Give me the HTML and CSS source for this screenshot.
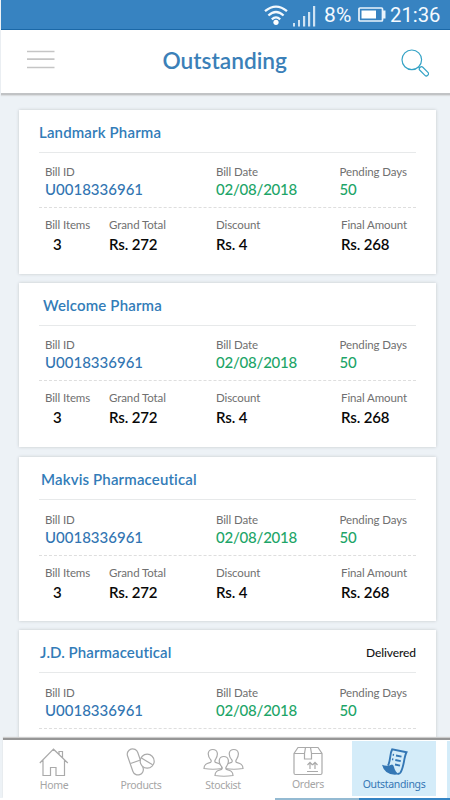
FILE: index.html
```html
<!DOCTYPE html>
<html lang="en">
<head>
<meta charset="utf-8">
<title>Outstanding</title>
<link rel="stylesheet" href="styles.css">
</head>
<body>
<div class="app">
  <div class="status">
    <svg class="wifi" width="24" height="22" viewBox="0 0 24 22" fill="none" stroke="#f2f8fd" stroke-width="2.3"><path d="M1 6.200Q12-3 23 6.200M4.400 10.500Q12 3.600 19.600 10.500M7.800 14.300Q12 10.500 16.200 14.300"/><circle cx="12" cy="17.300" r="2.600" fill="#fff" stroke="none"/></svg>
    <svg class="signal" width="23" height="21" viewBox="0 0 23 21" fill="#cfe3f3"><path d="M0 17h2v3.500H0zM5 14h2v6.500H5zM10 10h2.200v10.500H10zM15 6h2.200v14.500H15zM20 0h2.200v20.500H20z"/></svg>
    <span class="percent">8%</span>
    <svg class="battery" width="28" height="16" viewBox="0 0 28 16"><rect x="1" y="1" width="23.500" height="13" rx="1" fill="none" stroke="#e9f3fb" stroke-width="1.700"/><path d="M3.500 3.500h14.500v8H3.500z" fill="#fff"/><path d="M25 3.500h2.500v8H25z" fill="#e9f3fb"/></svg>
    <span class="clock">21:36</span>
  </div>
  <header class="header">
    <svg class="menu" width="28" height="20" viewBox="0 0 28 20" stroke="#c5c5c5" stroke-width="1.700"><path d="M0 1.500h27.500M0 9.200h27.500M0 17.500h27.500"/></svg>
    <h1 class="title">Outstanding</h1>
    <svg class="search" width="28" height="28" viewBox="0 0 28 28" fill="none" stroke="#35a3c6" stroke-width="1.200"><circle cx="10.800" cy="10.800" r="9.800"/><path d="M17.300 17.600l1.600 1.700"/><rect x="17.400" y="20.200" width="11" height="4.200" rx="1.900" transform="rotate(45 22.900 22.300)"/></svg>
  </header>
  <main class="list">
    <article class="card">
      <div class="card-head"><h2 class="name">Landmark Pharma</h2></div>
      <div class="row bill"><div><p>Bill ID</p><b class="id">U0018336961</b></div><div><p>Bill Date</p><b>02/08/2018</b></div><div><p>Pending Days</p><b>50</b></div></div>
      <div class="row amounts"><div><p>Bill Items</p><b class="count">3</b></div><div><p>Grand Total</p><b>Rs. 272</b></div><div><p>Discount</p><b>Rs. 4</b></div><div><p>Final Amount</p><b>Rs. 268</b></div></div>
    </article>
    <article class="card">
      <div class="card-head"><h2 class="name welcome">Welcome Pharma</h2></div>
      <div class="row bill"><div><p>Bill ID</p><b class="id">U0018336961</b></div><div><p>Bill Date</p><b>02/08/2018</b></div><div><p>Pending Days</p><b>50</b></div></div>
      <div class="row amounts"><div><p>Bill Items</p><b class="count">3</b></div><div><p>Grand Total</p><b>Rs. 272</b></div><div><p>Discount</p><b>Rs. 4</b></div><div><p>Final Amount</p><b>Rs. 268</b></div></div>
    </article>
    <article class="card late">
      <div class="card-head"><h2 class="name makvis">Makvis Pharmaceutical</h2></div>
      <div class="row bill"><div><p>Bill ID</p><b class="id">U0018336961</b></div><div><p>Bill Date</p><b>02/08/2018</b></div><div><p>Pending Days</p><b>50</b></div></div>
      <div class="row amounts"><div><p>Bill Items</p><b class="count">3</b></div><div><p>Grand Total</p><b>Rs. 272</b></div><div><p>Discount</p><b>Rs. 4</b></div><div><p>Final Amount</p><b>Rs. 268</b></div></div>
    </article>
    <article class="card late">
      <div class="card-head"><h2 class="name jd">J.D. Pharmaceutical</h2><span class="state">Delivered</span></div>
      <div class="row bill"><div><p>Bill ID</p><b class="id">U0018336961</b></div><div><p>Bill Date</p><b>02/08/2018</b></div><div><p>Pending Days</p><b>50</b></div></div>
    </article>
  </main>
  <nav class="nav">
    <a class="tab"><svg width="30" height="29" viewBox="0 0 30 29"><path d="M.8 15L14.500 1.200 28.800 15M4 12v15.500h7.500v-8h5.500v8h8.500V12M20 6V3.500h3.500V9.500"/></svg><span>Home</span></a>
    <a class="tab products"><svg width="30" height="29" viewBox="0 0 30 29" stroke-width="1.500"><rect x="3.900" y=".4" width="10.800" height="27" rx="5.400" transform="rotate(-19 9.300 13.900)"/><path d="M4.500 15.500l10-3.500"/><circle cx="21.200" cy="13.200" r="7" fill="#fff"/><path d="M15.400 10l11.200 6.800"/></svg><span>Products</span></a>
    <a class="tab stockist"><svg width="41" height="29" viewBox="0 0 41 29" stroke-width="1"><path id="person" d="M1 20.500c0-4.500 3-5 6.500-6 1-.7 1-2 0-3C4 7 4.500 1.500 9.800 1.500S15.500 7 12.500 11.500c-1 1-.8 2.300 0 3 3.500 1 6.500 1.500 6.500 6Q10 22 1 20.500z"/><use href="#person" x="21"/><use href="#person" x="11" y="7" fill="#fff"/></svg><span>Stockist</span></a>
    <a class="tab orders"><svg width="30" height="30" viewBox="0 0 30 30" stroke-width="1.400"><path d="M1 7.500L5 1.500h20l4 6V27q0 1.500-1.500 1.500h-25Q1 28.500 1 27zM1 7.500h10.500M18.500 7.500H29M12.500 1.500l-1 6V13h7V7.500l-1-6M14 25.500h11M17 23v-6M14.500 19l2.500-2.700 2.500 2.700M22 23v-6M19.500 19l2.500-2.700 2.500 2.700"/></svg><span>Orders</span></a>
    <a class="tab active"><svg width="28" height="30" viewBox="0 0 28 30"><path d="M8 19.500C11 14 9.500 8 12.200 3.200L26.500 6.200C23.500 12 24.500 20 20.500 26.500q-1.500 1.800-3 1" stroke-width="1.900"/><path d="M2 18.800q5 2 10-.3 1.500 0 2 2.500 1 5 5 7.300Q5 30.500 2 18.800z" fill="#3477b5" stroke="none"/><path d="M16 9.500l5.500 1.200M15.300 14l5.500 1.200M15 18.500l5 1.200M12.700 8.700l1.300.3M12 13.200l1.300.3" stroke-width="1.800"/></svg><span>Outstandings</span></a>
    <i class="edge"></i>
  </nav>
  <div class="bottom-line"><i></i><b></b></div>
</div>
</body>
</html>
```

FILE: styles.css
```css
* { box-sizing: border-box; margin: 0; padding: 0; }
body { font-family: Lato, sans-serif; background: #edf2f6; font-variant-ligatures: none; }
.app { width: 450px; height: 800px; overflow: hidden; display: flex; flex-direction: column; }
.status { height: 30px; flex: none; display: flex; align-items: flex-start; margin-left: 1px; padding-left: 263px; background: #3783c1; border-bottom: 1px solid #1b68a7; font: 20.3px/30px Roboto, sans-serif; color: #f4faff; }
.wifi { margin-top: 5px; }
.signal { margin: 6px 0 0 5px; }
.percent { width: 34px; margin-left: 8px; font-size: 21px; letter-spacing: .3px; }
.battery { margin-top: 7px; }
.clock { margin-left: 4px; }
.header { height: 65px; flex: none; display: flex; margin-left: 1px; background: #fff; border-bottom: 2px solid #c1c3c5; box-shadow: 0 1px 1px #dadddf; position: relative; }
.menu { margin: 20px 0 0 26px; }
.title { width: 126px; margin: 16px 0 0 107.500px; font-size: 22.7px; line-height: 30px; font-weight: 600; color: #3b80b8; white-space: nowrap; }
.search { margin: 19px 0 0 112.500px; }
.list { flex: none; height: 643px; padding: 15px 14px 0 19px; overflow: hidden; display: flex; flex-direction: column; gap: 9.300px; }
.card { height: 164px; flex: none; padding: 0 20px; background: #fff; box-shadow: 0 0 3px #c3c7ca; }
.card-head { height: 43px; display: flex; justify-content: space-between; border-bottom: 1px solid #e7e9ea; padding-top: 12px; }
.name { font-size: 15px; line-height: 20px; letter-spacing: .15px; font-weight: 600; color: #327cb8; white-space: nowrap; }
.welcome { margin-left: 4px; }
.makvis { margin-left: 2px; }
.jd { margin-left: 1px; letter-spacing: .08px; }
.state { font-size: 12px; line-height: 22px; letter-spacing: -.1px; font-weight: 500; color: #151515; }
.row { display: grid; padding-left: 6px; white-space: nowrap; }
.row p { font-size: 11.500px; line-height: 14px; color: #707070; letter-spacing: -.1px; }
.row b { display: block; font-size: 15px; line-height: 18px; font-weight: 500; }
.bill { height: 55px; grid-template-columns: 171px 123.500px 1fr; padding-top: 12px; border-bottom: 1px dashed #dedede; }
.bill b { color: #1da568; margin-top: 1px; letter-spacing: -.22px; }
.bill .id { color: #3275b2; letter-spacing: 0; }
.late .bill { height: 56px; padding-top: 13px; }
.amounts { grid-template-columns: 64px 107px 125px 1fr; padding-top: 10px; }
.amounts b { color: #080808; margin-top: 3px; font-weight: 600; letter-spacing: -.15px; }
.amounts .count { margin-left: 8px; }
.nav { height: 60px; flex: none; display: flex; margin-left: 3px; padding-top: 1px; border-top: 2px solid #969696; background: #fff; box-shadow: 0 -1px 1px #ccc; position: relative; }
.tab { width: 87px; display: flex; flex-direction: column; align-items: center; padding-top: 7px; font: 10.5px/16px "Noto Sans", sans-serif; letter-spacing: -.35px; color: #a5a5a5; }
.tab:first-child { width: 102px; }
.tab svg { fill: none; stroke: #aaa; stroke-width: 1.200; }
.tab span { white-space: nowrap; }
.tab.products { width: 72px; padding-top: 7px; }
.tab.stockist { width: 92px; }
.tab.orders { width: 78px; padding-top: 5px; }
.tab.active { height: 55px; width: 84px; margin-left: 5px; padding-top: 5px; background: #d4ecf9; color: #3477b5; }
.tab.active svg { stroke: #3477b5; }
.edge { width: 3px; margin-left: auto; background: #d4ecf9; }
.bottom-line { height: 2px; flex: none; display: flex; padding-left: 275px; background: #fff; }
.bottom-line i { width: 84px; background: #94bad2; }
.bottom-line b { flex: 1; background: #3484c4; }
```
